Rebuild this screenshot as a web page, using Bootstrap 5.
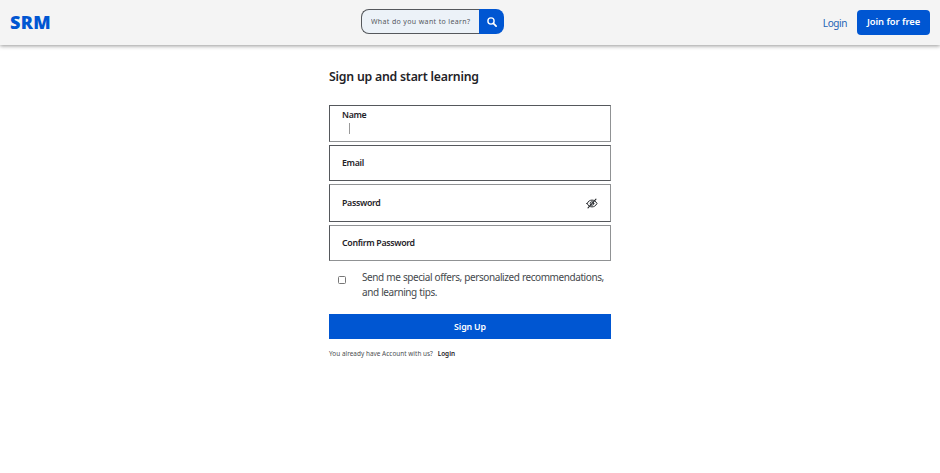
<!DOCTYPE html>
<html lang="en">
<head>
<meta charset="utf-8">
<meta name="viewport" content="width=device-width, initial-scale=1">
<title>SRM - Sign up</title>
<link href="https://cdn.jsdelivr.net/npm/bootstrap@5.3.0/dist/css/bootstrap.min.css" rel="stylesheet">
<style>
:root { --brand: #0056d2; }
body { font-family: "Noto Sans", "Open Sans", sans-serif; color: #1f2328; line-height: 1.2; overflow: hidden; }
.topbar { height: 45px; background: #f4f4f4; box-shadow: 0 1px 4px rgba(0,0,0,.42); padding: 0 10px; }
.brand-side { flex: 0 0 351px; }
.logo { color: var(--brand); font: 800 18px/24px "Open Sans", sans-serif; letter-spacing: .3px; position: relative; top: -1px; }
.search { width: 143px; height: 25px; margin-top: -2px; }
.search-input { width: 118px; border: 1px solid #55585c; border-right: 0; border-radius: 8px 0 0 8px; background: #ecf2f8; color: #3f4347; font-size: 7px; letter-spacing: .36px; padding: 2px 0 0 9px; outline: 0; }
.search-input::placeholder { color: #55595e; opacity: 1; }
.search-btn { width: 25px; border: 0; border-radius: 0 8px 8px 0; background: var(--brand); }
.login-link { color: #2464b4; font-size: 10px; letter-spacing: -.4px; margin-right: 10px; }
.join { width: 73px; height: 25px; margin-top: -1px; border: 0; border-radius: 4px; background: var(--brand); color: #fff; font-size: 9.4px; font-weight: 600; letter-spacing: -.05px; white-space: nowrap; }
.signup { width: 282px; padding-top: 24px; }
.heading { font-size: 12.3px; font-weight: 600; line-height: 16px; letter-spacing: -.22px; margin: 0 0 20px; }
.field { border: 1px solid #55585c; border-right-color: #909294; padding: 0 12px; margin-bottom: 3px; font-size: 8.8px; font-weight: 600; letter-spacing: -.33px; }
.f-name { height: 37px; border-bottom-color: #909294; }
.f-email { height: 36px; }
.f-pass { height: 38px; border-top-color: #909294; }
.f-confirm { height: 36px; border-color: #909294; border-left-color: #55585c; margin-bottom: 9px; }
.caret { width: 1px; height: 11px; background: #999; margin: 2px 0 0 7px; }
.check { width: 8px; height: 8px; border: 1px solid #777; border-radius: 1.5px; appearance: none; margin: 6px 15px 0 9px; background: #fff; flex: none; }
.offer { font-size: 10px; line-height: 15px; letter-spacing: -.42px; word-spacing: .3px; padding-left: 1px; color: #45494d; white-space: nowrap; }
.submit { height: 25px; margin-top: 14px; padding: 1px 0 0; border: 0; background: var(--brand); color: #fff; font-size: 8.8px; font-weight: 600; letter-spacing: -.15px; }
.foot { font-size: 6.4px; line-height: 10px; letter-spacing: .03px; margin-top: 10px; color: #4a4d50; }
.foot a { color: #1f2328; font-weight: 600; margin-left: 3px; }
</style>
</head>
<body>
<nav class="topbar d-flex align-items-center">
  <div class="brand-side"><a class="logo text-decoration-none" href="#">SRM</a></div>
  <form class="search d-flex">
    <input class="search-input" type="text" placeholder="What do you want to learn?">
    <button class="search-btn d-flex align-items-center justify-content-center p-0" type="button" aria-label="Search">
      <svg width="10" height="10" viewBox="0 0 10 10" fill="none" stroke="#fff" stroke-linecap="round"><circle cx="4" cy="4" r="3.1" stroke-width="1.4"/><path d="M6.4 6.4 9.1 9.1" stroke-width="1.7"/></svg>
    </button>
  </form>
  <div class="d-flex align-items-center ms-auto">
    <a class="login-link text-decoration-none" href="#">Login</a>
    <button class="join p-0" type="button">Join for free</button>
  </div>
</nav>
<main class="signup mx-auto">
  <h1 class="heading"><span>Sign up and start learning</span></h1>
  <form>
    <div class="field f-name"><div class="pt-1"><span>Name</span></div><div class="caret"></div></div>
    <div class="field f-email d-flex align-items-center"><span>Email</span></div>
    <div class="field f-pass d-flex align-items-center justify-content-between"><span>Password</span>
      <svg width="12" height="11" viewBox="0 0 12 11" fill="none" stroke="#25282c" stroke-linecap="round"><path d="M1 5.5C2.3 3.2 4 2.1 6 2.1s3.7 1.1 5 3.4C9.7 7.8 8 8.9 6 8.9S2.3 7.8 1 5.5Z" stroke-width="1"/><circle cx="6" cy="5.5" r="1.8" stroke-width=".9"/><path d="M2 9.8 10 1.2" stroke-width="1.1"/></svg>
    </div>
    <div class="field f-confirm d-flex align-items-center"><span>Confirm Password</span></div>
    <label class="d-flex align-items-start">
      <input class="check" type="checkbox">
      <span class="offer">Send me special offers, personalized recommendations,<br>and learning tips.</span>
    </label>
    <button class="submit d-block w-100" type="button">Sign Up</button>
  </form>
  <p class="foot mb-0">You already have Account with us? <a class="text-decoration-none" href="#">Login</a></p>
</main>
<script src="https://cdn.jsdelivr.net/npm/bootstrap@5.3.0/dist/js/bootstrap.bundle.min.js"></script>
</body>
</html>
